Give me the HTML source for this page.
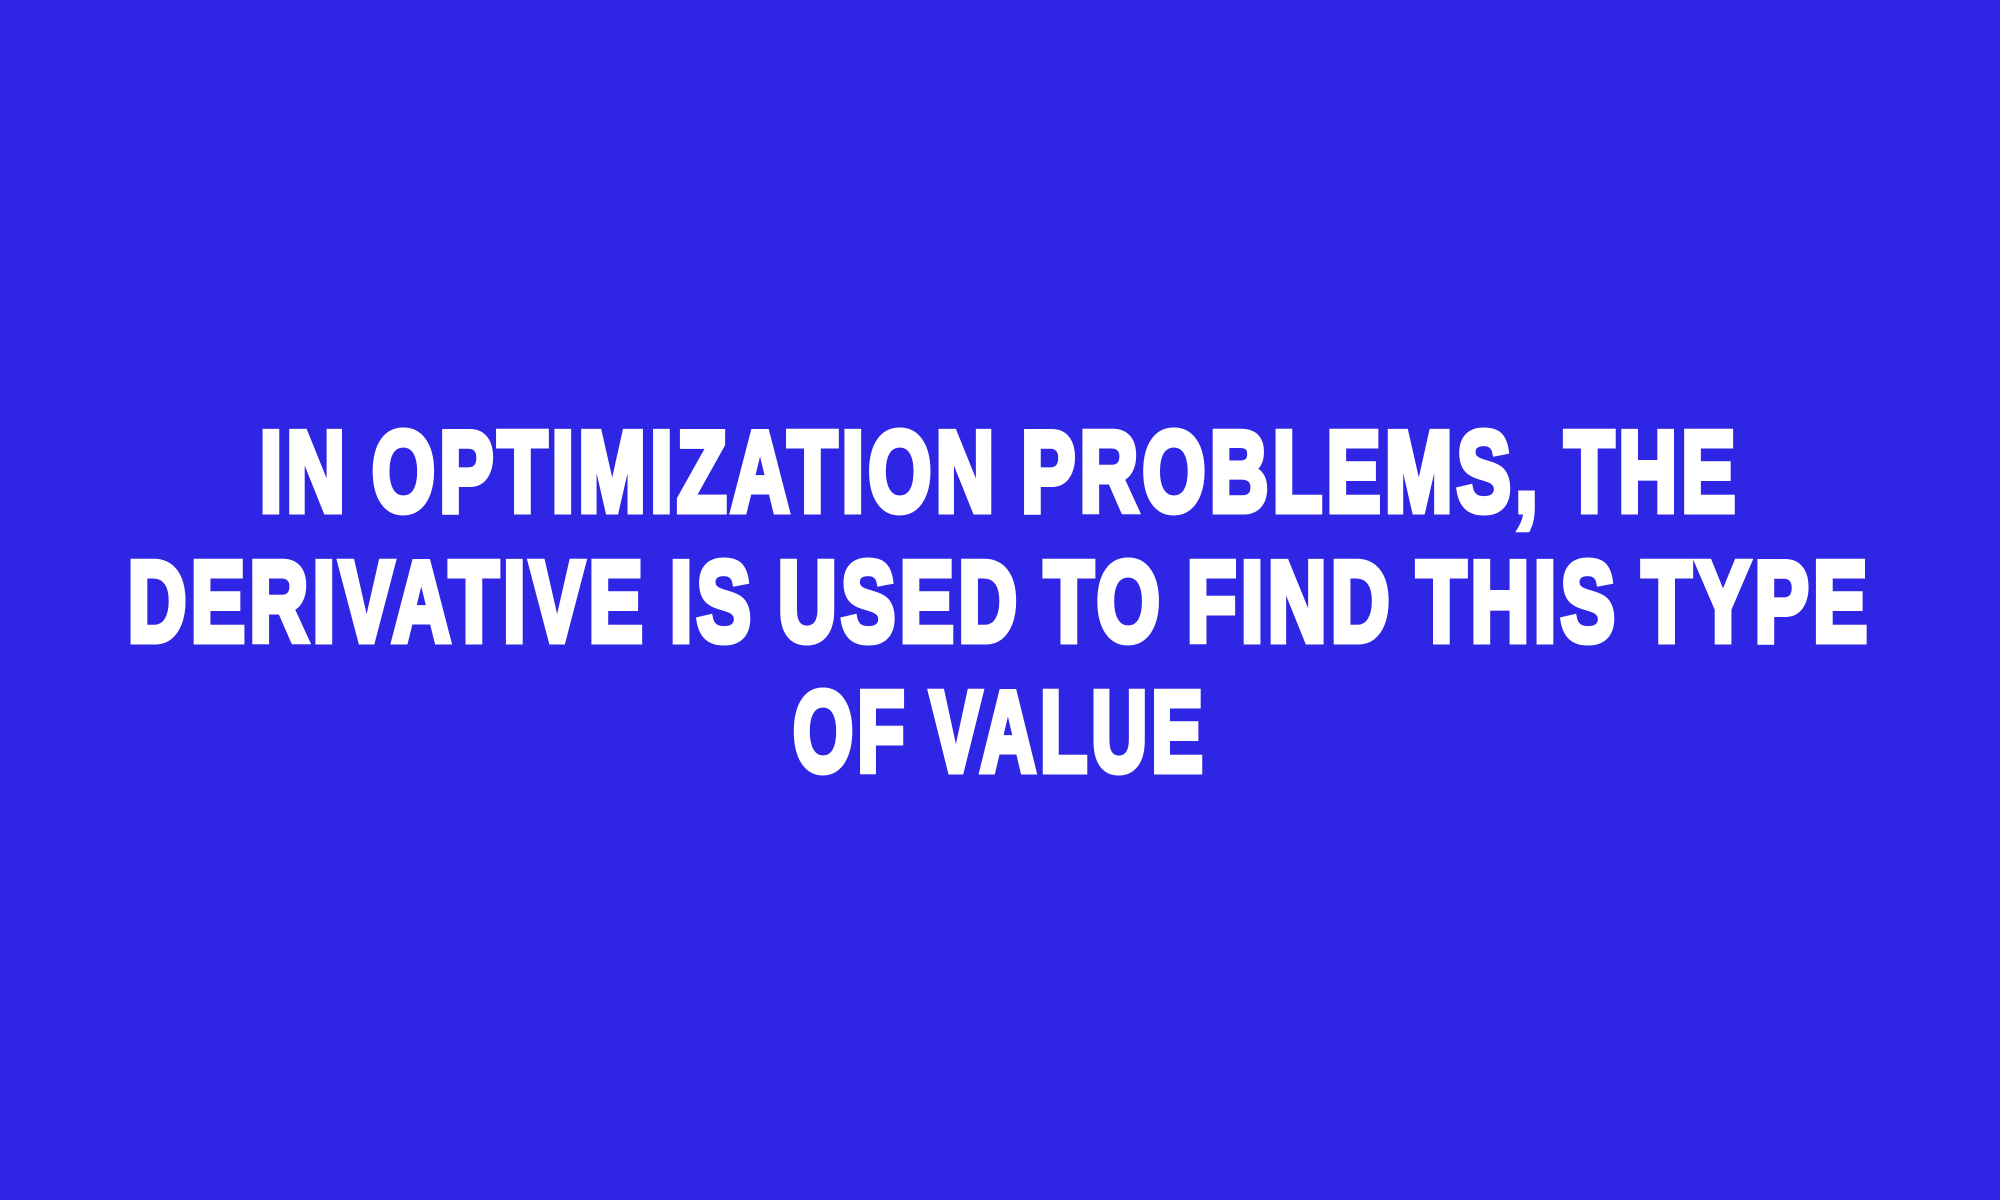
<!DOCTYPE html>
<html><head><meta charset="utf-8"><style>
html,body{margin:0;padding:0;width:2000px;height:1200px;overflow:hidden;background:#2f25e5;}
.l{position:absolute;left:-1000px;width:4000px;text-align:center;height:120px;}
.l span{display:inline-block;font-family:"Liberation Sans",sans-serif;font-weight:bold;font-size:114px;line-height:120px;color:#fff;-webkit-text-stroke:7px #fff;white-space:nowrap;transform-origin:center top;letter-spacing:6px;word-spacing:-6px;}
</style></head><body>
<div class="l" style="top:413px"><span data-w="1480">IN OPTIMIZATION PROBLEMS, THE</span></div>
<div class="l" style="top:543px"><span data-w="1744">DERIVATIVE IS USED TO FIND THIS TYPE</span></div>
<div class="l" style="top:673px"><span data-w="414">OF VALUE</span></div>
<script>
document.querySelectorAll('.l span').forEach(function(s){
  var w=s.getBoundingClientRect().width;var t=+s.getAttribute('data-w');
  s.style.transform='scaleX('+(t/w)+')';
});
</script>
</body></html>
